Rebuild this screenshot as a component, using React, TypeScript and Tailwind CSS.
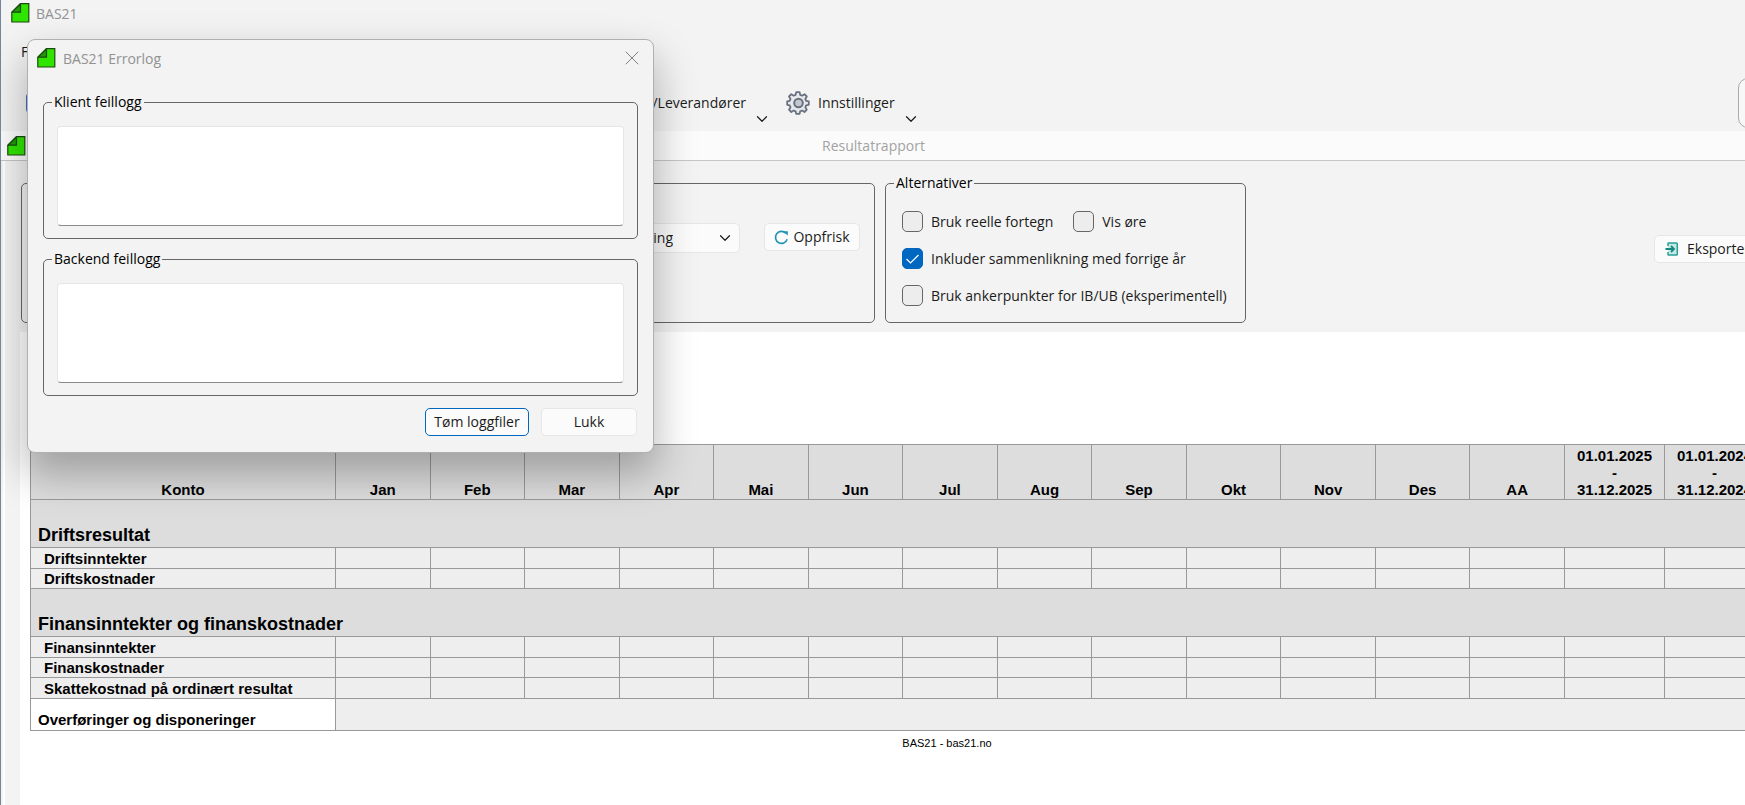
import { useState } from "react";
import { ChevronDown, X } from "lucide-react";

const MONTHS = ["Jan", "Feb", "Mar", "Apr", "Mai", "Jun", "Jul", "Aug", "Sep", "Okt", "Nov", "Des", "AA"];

const PERIODS = [
  { from: "01.01.2025", to: "31.12.2025" },
  { from: "01.01.2024", to: "31.12.2024" },
];

const SECTIONS = [
  { title: "Driftsresultat", rows: ["Driftsinntekter", "Driftskostnader"] },
  {
    title: "Finansinntekter og finanskostnader",
    rows: ["Finansinntekter", "Finanskostnader", "Skattekostnad på ordinært resultat"],
  },
];

// ── Icons ──

const IconApp = () => (
  <svg className="shrink-0" width="19" height="20" viewBox="0 0 19 20" fill="none">
    <path d="M9.5 0.7H17.8V19H0.8V9.5Z" fill="#2fe500" stroke="#1c4a12" strokeWidth="1.2" />
    <path d="M9.5 0.7V9.2H0.8Z" fill="#1f9a06" stroke="#1c4a12" strokeWidth="1.2" strokeLinejoin="round" />
  </svg>
);

const IconGear = () => (
  <svg className="shrink-0" width="24" height="24" viewBox="0 0 24 24" fill="none">
    <path
      d="M10.2 1.2h3.4l.6 2.7 1.9.8 2.4-1.5 2.3 2.3-1.5 2.4.8 1.9 2.7.6v3.4l-2.7.6-.8 1.9 1.5 2.4-2.3 2.3-2.4-1.5-1.9.8-.6 2.5h-3.4l-.6-2.5-1.9-.8-2.4 1.5L3 18.7l1.5-2.4-.8-1.9-2.5-.6v-3.4l2.5-.6.8-1.9L3 5.5l2.3-2.3 2.4 1.5 1.9-.8Z"
      fill="#e7e9ec"
      stroke="#697080"
      strokeWidth="1.8"
      strokeLinejoin="round"
    />
    <circle cx="12.5" cy="12" r="4.3" fill="#c3c8cf" stroke="#697080" strokeWidth="2" />
  </svg>
);

const IconRefresh = () => (
  <svg className="shrink-0" width="15" height="15" viewBox="0 0 15 15" fill="none">
    <path d="M13.2 9.3A6 6 0 1 1 11.8 3.2" stroke="#1d94b4" strokeWidth="1.6" />
    <path d="M8.8 1.2H13.8V5.6Z" fill="#1d94b4" />
  </svg>
);

const IconExport = () => (
  <svg className="shrink-0" width="14" height="14" viewBox="0 0 14 14" fill="none">
    <path d="M3 4V1.5Q3 1 3.5 1H11.5Q12.3 1 12.3 1.8V12.2Q12.3 13 11.5 13H3.5Q3 13 3 12.5V10" fill="#c9e8e4" stroke="#27a096" strokeWidth="1.5" />
    <path d="M0.5 7H8.5M6 4L9 7L6 10" stroke="#128a80" strokeWidth="1.8" />
  </svg>
);

// ── Controls ──

function GroupBox({ title, className, children }: { title: string; className: string; children: React.ReactNode }) {
  return (
    <fieldset className={`rounded-[5px] border border-[#666] px-[13px] ${className}`}>
      <legend className="-ml-[5px] px-0.5 leading-5 text-black">{title}</legend>
      {children}
    </fieldset>
  );
}

function CheckBox({ label, defaultChecked }: { label: string; defaultChecked?: boolean }) {
  const [checked, setChecked] = useState(!!defaultChecked);
  return (
    <label className="flex items-center gap-2 leading-5">
      <span className="relative flex size-[21px]">
        <input
          type="checkbox"
          className="size-[21px] appearance-none rounded-[5px] border border-[#666] bg-[#ededed] checked:border-[#0067c0] checked:bg-[#0067c0]"
          checked={checked}
          onChange={(e) => setChecked(e.target.checked)}
        />
        {checked && (
          <svg className="pointer-events-none absolute inset-0" width="21" height="21" viewBox="0 0 21 21" fill="none">
            <path d="M4.5 11L8.5 15L16.5 7" stroke="white" strokeWidth="1.2" />
          </svg>
        )}
      </span>
      {label}
    </label>
  );
}

function ToolMenu({ label, icon }: { label: string; icon?: React.ReactNode }) {
  return (
    <button className="flex h-[50px] items-center whitespace-nowrap">
      {icon}
      <span className="pl-2 leading-5">{label}</span>
      <ChevronDown className="ml-[7px] self-end" size={18} strokeWidth={1.6} />
    </button>
  );
}

function LogBox({ title }: { title: string }) {
  return (
    <GroupBox title={title} className="pt-[14px] pb-3">
      <textarea
        aria-label={title}
        className="block h-[100px] w-full resize-none rounded border border-[#e6e6e6] border-b-[#8a8a8a] bg-white p-1 outline-none"
      />
    </GroupBox>
  );
}

function ErrorLogDialog({ onClose }: { onClose: () => void }) {
  return (
    <div
      role="dialog"
      aria-labelledby="errorlog-title"
      className="absolute top-[39px] left-[26px] w-[627px] rounded-lg border border-[#b0b0b0] bg-[#f3f3f3] px-[15px] pb-4 shadow-[0_20px_40px_2px_rgba(0,0,0,0.28)]"
    >
      <div className="-mx-1.5 flex h-[52px] items-start gap-[7px] pt-2">
        <IconApp />
        <h2 id="errorlog-title" className="leading-[22px] text-[#929292]">
          BAS21 Errorlog
        </h2>
        <button className="-mt-0.5 ml-auto" aria-label="Lukk vindu" onClick={onClose}>
          <X size={24} strokeWidth={1} color="#808080" />
        </button>
      </div>
      <div className="flex flex-col gap-2.5">
        <LogBox title="Klient feillogg" />
        <LogBox title="Backend feillogg" />
      </div>
      <div className="mt-3 flex justify-end gap-3 pr-px">
        <button className="h-7 w-26 rounded-[5px] border border-[#0067c0] bg-[#fbfbfb] leading-5">Tøm loggfiler</button>
        <button className="h-7 w-24 rounded-[5px] border border-[#e6e6e6] bg-[#fbfbfb] leading-5" onClick={onClose}>
          Lukk
        </button>
      </div>
    </div>
  );
}

// ── Report ──

function ReportTable() {
  return (
    <table className="w-[1735px] table-fixed border-collapse font-['Liberation_Sans',Arial,sans-serif] text-[15px] leading-[17px] font-bold text-black [&_td]:border [&_td]:border-[#999] [&_th]:border [&_th]:border-[#999]">
      <colgroup>
        <col className="w-[305px]" />
        {MONTHS.map((m) => (
          <col key={m} />
        ))}
        <col className="w-[100px]" />
        <col className="w-[100px]" />
      </colgroup>
      <thead>
        <tr className="h-[55px] bg-[#ddd] align-bottom">
          <th className="pb-px">Konto</th>
          {MONTHS.map((m) => (
            <th key={m} className="pb-px">
              {m}
            </th>
          ))}
          {PERIODS.map((p) => (
            <th key={p.from} className="pb-px">
              {p.from}
              <br />-<br />
              {p.to}
            </th>
          ))}
        </tr>
      </thead>
      {SECTIONS.map((s) => (
        <tbody key={s.title}>
          <tr className="h-12 bg-[#ddd] align-bottom">
            <th colSpan={16} className="px-[7px] pb-0.5 text-left text-lg leading-5">
              {s.title}
            </th>
          </tr>
          {s.rows.map((r) => (
            <tr key={r} className="h-[21px] bg-[#eee] odd:h-5">
              <th className="px-[13px] text-left">{r}</th>
              {MONTHS.map((m) => (
                <td key={m} />
              ))}
              <td />
              <td />
            </tr>
          ))}
        </tbody>
      ))}
      <tbody>
        <tr className="h-8 align-bottom">
          <th className="bg-white px-[7px] pb-0.5 text-left">Overføringer og disponeringer</th>
          <td colSpan={15} className="bg-[#eee]" />
        </tr>
      </tbody>
    </table>
  );
}

export default function App() {
  const [dialogOpen, setDialogOpen] = useState(true);

  return (
    <div className="relative flex min-h-screen flex-col overflow-hidden border-l border-[#73879c] bg-[#f3f3f3] font-['Open_Sans','Noto_Sans',sans-serif] text-sm text-[#1b1b1b]">
      <header className="flex h-10 items-start gap-1.5 pt-[3px] pl-2.5">
        <IconApp />
        <h1 className="leading-[22px] text-[#929292]">BAS21</h1>
      </header>
      <nav className="flex h-6 items-center pl-5">
        <button className="leading-5">Fil</button>
      </nav>

      <div className="flex h-[67px] items-center pt-2.5">
        <div className="flex w-[770px] items-center justify-between pl-[25px]">
          <button aria-label="Hjem">
            <span className="block size-5 rounded border-2 border-[#3b6fd8] bg-[#6f97e8]" />
          </button>
          <ToolMenu label="Kunder/Leverandører" />
        </div>
        <div className="ml-[15px]">
          <ToolMenu label="Innstillinger" icon={<IconGear />} />
        </div>
        <input
          aria-label="Søk"
          className="-mr-[193px] ml-auto h-[50px] w-[200px] shrink-0 rounded-[10px] border border-[#aaa] bg-[#f7f7f7] outline-none"
        />
      </div>

      <main className="flex grow flex-col">
        <div className="flex h-[30px] items-center border-b border-[#c6c6c6] bg-[#fbfbfb] pl-1.5">
          <IconApp />
          <h2 className="mr-6 grow text-center leading-5 text-[#a3a3a3]">Resultatrapport</h2>
        </div>

        <div className="ml-0.5 flex grow flex-col border-l-2 border-white pl-[15px]">
          <div className="flex pt-3 pb-[9px]">
            <div className="mt-2.5 mr-2.5 ml-px flex h-[140px] w-[854px] items-start justify-end rounded-[5px] border border-[#666] pt-[39px] pr-3.5">
              <div className="relative mr-6">
                <select
                  aria-label="Visning"
                  className="h-[30px] w-[200px] appearance-none rounded-[5px] border border-[#e6e6e6] bg-[#fbfbfb] pr-[66px] text-right"
                >
                  <option>Avdeling</option>
                </select>
                <ChevronDown className="pointer-events-none absolute top-1.5 right-1.5" size={18} strokeWidth={1.6} />
              </div>
              <button className="flex h-7 w-24 items-center justify-center gap-1 rounded-[5px] border border-[#e6e6e6] bg-[#fbfbfb] leading-5">
                <IconRefresh />
                Oppfrisk
              </button>
            </div>

            <GroupBox title="Alternativer" className="w-[361px] whitespace-nowrap">
              <div className="flex flex-col gap-4 pt-[18px] pb-4 pl-[3px]">
                <div className="flex gap-5">
                  <CheckBox label="Bruk reelle fortegn" />
                  <CheckBox label="Vis øre" />
                </div>
                <CheckBox label="Inkluder sammenlikning med forrige år" defaultChecked />
                <CheckBox label="Bruk ankerpunkter for IB/UB (eksperimentell)" />
              </div>
            </GroupBox>

            <button className="mt-[62px] -mr-[19px] ml-auto flex h-7 w-[110px] shrink-0 items-center gap-2 self-start rounded-[5px] border border-[#e6e6e6] bg-[#fbfbfb] pl-2.5 leading-5">
              <IconExport />
              Eksporter
            </button>
          </div>

          <div className="grow overflow-hidden bg-white pt-28 pl-2.5">
            <div className="w-[1834px]">
              <ReportTable />
              <p className="mt-1 text-center font-['Liberation_Sans',Arial,sans-serif] text-[11px] leading-4 text-black">
                BAS21 - bas21.no
              </p>
            </div>
          </div>
        </div>
      </main>

      {dialogOpen && <ErrorLogDialog onClose={() => setDialogOpen(false)} />}
    </div>
  );
}
